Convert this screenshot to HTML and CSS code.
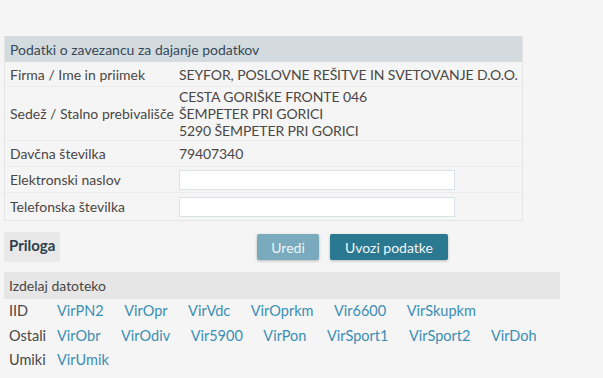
FILE: index.html
```html
<!DOCTYPE html>
<html lang="sl">
<head>
    <meta charset="UTF-8">
    <title>Podatki o zavezancu</title>
    <link rel="stylesheet" href="styles.css">
</head>
<body>
    <div class="panel">
        <div class="panel-head">Podatki o zavezancu za dajanje podatkov</div>
        <div class="row">
            <div class="label">Firma / Ime in priimek</div>
            <div class="value">SEYFOR, POSLOVNE REŠITVE IN SVETOVANJE D.O.O.</div>
        </div>
        <div class="row">
            <div class="label">Sedež / Stalno prebivališče</div>
            <div class="value">CESTA GORIŠKE FRONTE 046<br>ŠEMPETER PRI GORICI<br>5290 ŠEMPETER PRI GORICI</div>
        </div>
        <div class="row row-tall">
            <div class="label">Davčna številka</div>
            <div class="value">79407340</div>
        </div>
        <div class="row row-tall">
            <div class="label">Elektronski naslov</div>
            <div class="value"><input type="text" class="field"></div>
        </div>
        <div class="row row-tall">
            <div class="label">Telefonska številka</div>
            <div class="value"><input type="text" class="field"></div>
        </div>
    </div>

    <div class="actions">
        <div class="tab">Priloga</div>
        <button class="btn btn-light">Uredi</button>
        <button class="btn btn-dark">Uvozi podatke</button>
    </div>

    <div class="files">
        <div class="files-head">Izdelaj datoteko</div>
        <div class="links">
            <span class="group">IID</span>
            <a href="#">VirPN2</a><a href="#">VirOpr</a><a href="#">VirVdc</a><a href="#">VirOprkm</a><a href="#">Vir6600</a><a href="#">VirSkupkm</a>
        </div>
        <div class="links">
            <span class="group">Ostali</span>
            <a href="#">VirObr</a><a href="#">VirOdiv</a><a href="#">Vir5900</a><a href="#">VirPon</a><a href="#">VirSport1</a><a href="#">VirSport2</a><a href="#">VirDoh</a>
        </div>
        <div class="links">
            <span class="group">Umiki</span>
            <a href="#">VirUmik</a>
        </div>
    </div>
</body>
</html>
```
FILE: styles.css
```css
body {
    margin: 0;
    padding: 36px 0 0 4px;
    background-color: #f5f5f5;
    font-family: Lato, "Open Sans", sans-serif;
    font-size: 14px;
    color: #4a4745;
}
.panel {
    width: 517px;
    border: 1px solid #e4e6e6;
    border-top: 0;
}
.panel-head {
    background-color: #d4dbdf;
    color: #34495a;
    padding: 5px 5px 4px;
    line-height: 17px;
}
.row {
    display: flex;
    align-items: center;
    box-sizing: border-box;
    min-height: 25px;
    border-bottom: 1px solid #ebebeb;
}
.row-tall {
    min-height: 26px;
}
.row:last-child {
    border-bottom: 0;
    min-height: 27px;
}
.label {
    flex: none;
    width: 169px;
    padding-left: 5px;
    line-height: 17px;
    white-space: nowrap;
}
.value {
    line-height: 17px;
    padding: 1px 0;
    white-space: nowrap;
    letter-spacing: -0.1px;
}
.field {
    width: 276px;
    height: 20px;
    box-sizing: border-box;
    border: 1px solid #d6e4e6;
    background: #fff;
    margin: 0;
    display: block;
}
.actions {
    display: flex;
    align-items: center;
    margin-top: 11px;
}
.tab {
    width: 56px;
    height: 30px;
    box-sizing: border-box;
    padding: 4px 0 0 5px;
    background-color: #e8e8e8;
    font-weight: bold;
    color: #2e3d4c;
    font-size: 15px;
}
.btn {
    height: 26px;
    border: 0;
    border-radius: 2px;
    font-family: inherit;
    font-size: 14px;
    padding: 0 10px;
    box-shadow: 0 1px 3px rgba(0, 0, 0, 0.25);
}
.btn-light {
    margin-left: 197px;
    width: 62px;
    background-color: #7aaabd;
    color: #eef4f6;
}
.btn-dark {
    margin-left: 11px;
    width: 118px;
    background-color: #2b7891;
    color: #f2f6f7;
}
.files {
    margin-top: 10px;
}
.files-head {
    width: 546px;
    background-color: #e6e6e6;
    padding: 5px 5px;
    line-height: 17px;
}
.links {
    display: flex;
    padding-left: 5px;
    line-height: 24.5px;
    font-size: 14.5px;
}
.group {
    width: 48px;
}
.links a {
    color: #3a8eb4;
    text-decoration: none;
    margin-right: 20.5px;
}
```
